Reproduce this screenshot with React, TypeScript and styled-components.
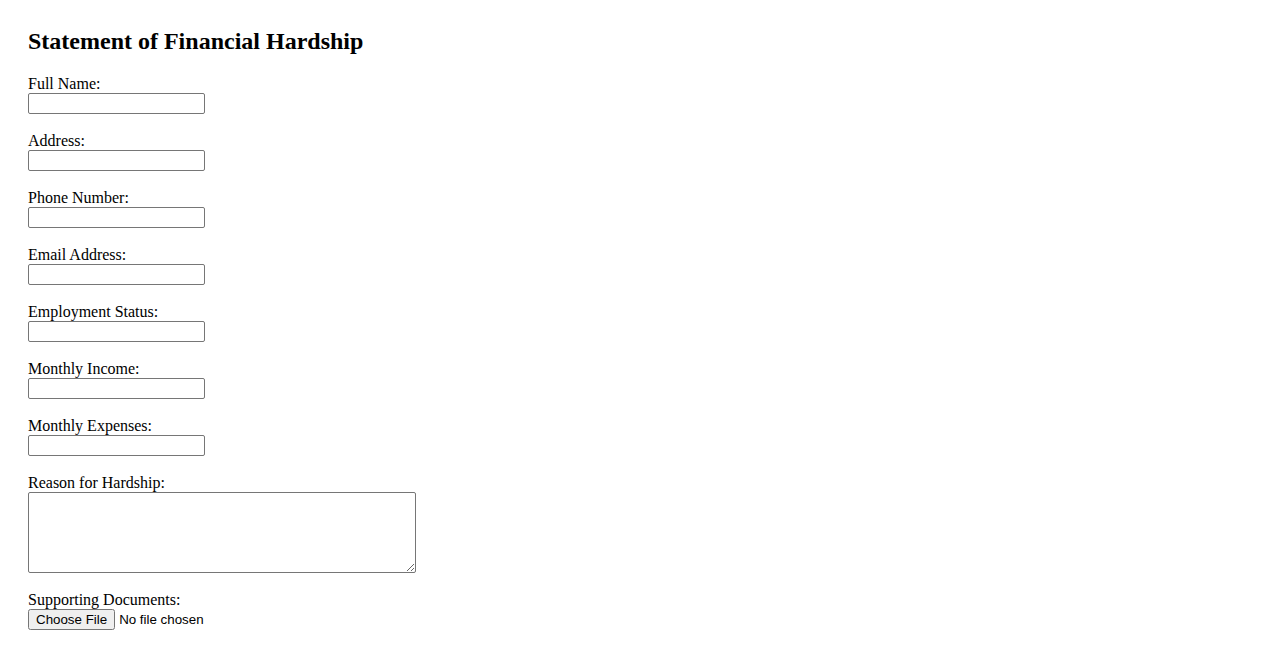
import React from 'react';
import styled, {createGlobalStyle} from 'styled-components';

const GlobalStyle = createGlobalStyle`
  body {
    margin: 8px;
    background: #ffffff;
    color: #000000;
    font-family: "Liberation Serif", "Times New Roman", serif;
    font-size: 16px;
  }
`

const Page = styled.div`
  padding: 20px;
`

const Title = styled.h2`
  margin: 0 0 20px;
  font-size: 24px;
  font-weight: bold;
`

const Form = styled.form`
  display: flex;
  flex-direction: column;
  align-items: flex-start;
`

const Field = styled.div`
  display: flex;
  flex-direction: column;
  align-items: flex-start;
  margin-bottom: 18px;
`

const Label = styled.label`
  display: block;
  line-height: 18px;
`

const TextInput = styled.input`
  box-sizing: border-box;
  width: 177px;
  height: 21px;
  padding: 1px 2px;
  border: 1px solid #767676;
  border-radius: 2px;
  font-family: "Liberation Sans", Arial, sans-serif;
  font-size: 13.33px;
  background: #ffffff;
`

const TextArea = styled.textarea`
  box-sizing: border-box;
  width: 388px;
  height: 81px;
  padding: 2px;
  border: 1px solid #767676;
  border-radius: 2px;
  font-family: "Liberation Mono", monospace;
  font-size: 13.33px;
`

const FileInput = styled.input`
  font-family: "Liberation Sans", Arial, sans-serif;
  font-size: 13.33px;
  height: 21px;
`

const fields = [
    'Full Name:',
    'Address:',
    'Phone Number:',
    'Email Address:',
    'Employment Status:',
    'Monthly Income:',
    'Monthly Expenses:',
]

const App = () => {
    return (
        <Page>
            <GlobalStyle/>
            <Title>Statement of Financial Hardship</Title>
            <Form>
                {fields.map((label, index) => (
                    <Field key={index}>
                        <Label htmlFor={'f' + index}>{label}</Label>
                        <TextInput id={'f' + index} type="text"/>
                    </Field>
                ))}
                <Field>
                    <Label htmlFor="reason">Reason for Hardship:</Label>
                    <TextArea id="reason"/>
                </Field>
                <Field>
                    <Label htmlFor="docs">Supporting Documents:</Label>
                    <FileInput id="docs" type="file"/>
                </Field>
            </Form>
        </Page>
    );
};

export default App;
